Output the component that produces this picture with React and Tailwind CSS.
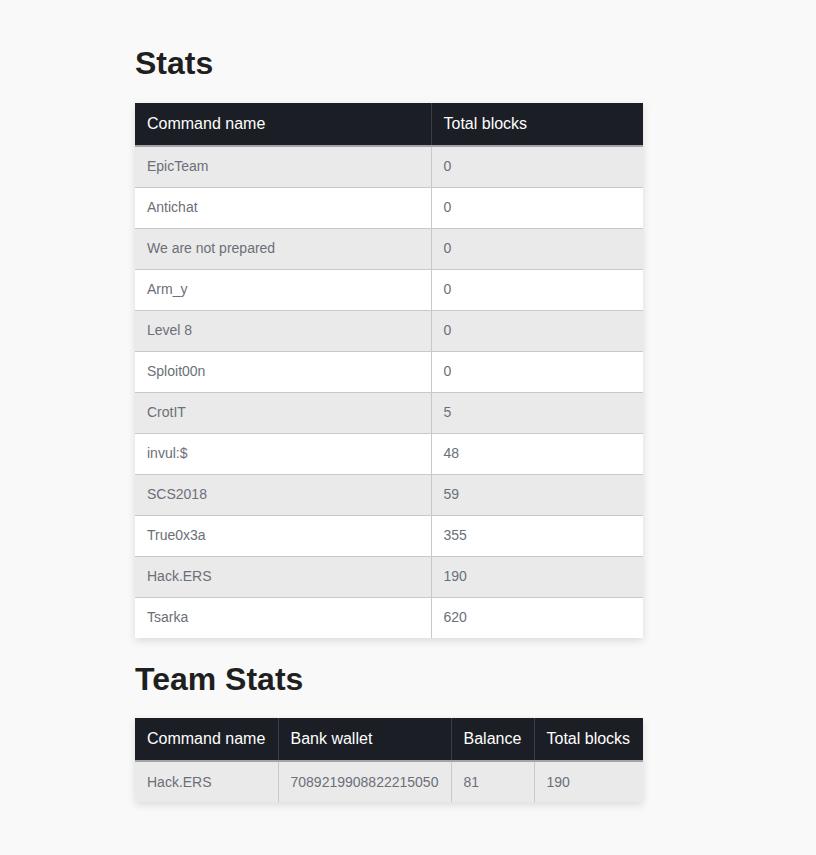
export default function App() {
  const stats = [
    ["EpicTeam", "0"],
    ["Antichat", "0"],
    ["We are not prepared", "0"],
    ["Arm_y", "0"],
    ["Level 8", "0"],
    ["Sploit00n", "0"],
    ["CrotIT", "5"],
    ["invul:$", "48"],
    ["SCS2018", "59"],
    ["True0x3a", "355"],
    ["Hack.ERS", "190"],
    ["Tsarka", "620"],
  ];
  const font = { fontFamily: '"Liberation Sans", Arial, sans-serif' };
  return (
    <div className="min-h-[855px] w-full bg-[#f9f9f9]" style={font}>
      <div className="ml-[135px] w-[508px] pt-[44px] pb-10">
        <h2 className="text-[32px] font-bold leading-[38px] text-[#1f1f1f] mb-[21px]">Stats</h2>
        <table className="w-[508px] border-collapse table-fixed shadow-[0_3px_8px_rgba(0,0,0,0.12)]">
          <thead>
            <tr className="bg-[#1b1e24] text-white text-[16px] h-[43px] border-b-2 border-[#a1a5a9]">
              <th className="w-[296px] text-left font-normal px-3 border-r border-[#3a3f46]">Command name</th>
              <th className="text-left font-normal px-3">Total blocks</th>
            </tr>
          </thead>
          <tbody>
            {stats.map(([n, v], i) => (
              <tr
                key={n}
                className={`${i % 2 === 0 ? "bg-[#eaeaea]" : "bg-white"} h-[41px] text-[14px] text-[#6b6f78] ${i < stats.length - 1 ? "border-b border-[#c9c9c9]" : ""}`}
              >
                <td className="px-3 border-r border-[#c9c9c9]">{n}</td>
                <td className="px-3">{v}</td>
              </tr>
            ))}
          </tbody>
        </table>
        <h2 className="text-[32px] font-bold leading-[38px] text-[#1f1f1f] mt-[22px] mb-[20px]">Team Stats</h2>
        <table className="w-[508px] border-collapse table-fixed shadow-[0_3px_8px_rgba(0,0,0,0.12)]">
          <thead>
            <tr className="bg-[#1b1e24] text-white text-[16px] h-[43px] border-b-2 border-[#a1a5a9]">
              <th className="w-[143px] text-left font-normal px-3 border-r border-[#3a3f46] whitespace-nowrap">Command name</th>
              <th className="w-[173px] text-left font-normal px-3 border-r border-[#3a3f46]">Bank wallet</th>
              <th className="w-[83px] text-left font-normal px-3 border-r border-[#3a3f46]">Balance</th>
              <th className="text-left font-normal px-3 whitespace-nowrap">Total blocks</th>
            </tr>
          </thead>
          <tbody>
            <tr className="bg-[#eaeaea] h-[41px] text-[14px] text-[#6b6f78]">
              <td className="px-3 border-r border-[#c9c9c9]">Hack.ERS</td>
              <td className="px-3 border-r border-[#c9c9c9]">7089219908822215050</td>
              <td className="px-3 border-r border-[#c9c9c9]">81</td>
              <td className="px-3">190</td>
            </tr>
          </tbody>
        </table>
      </div>
    </div>
  );
}
